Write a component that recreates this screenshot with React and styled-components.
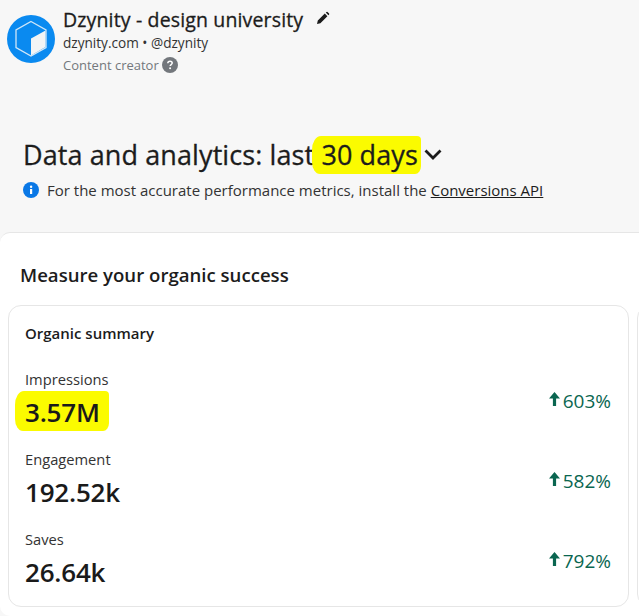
import styled, { createGlobalStyle } from "styled-components";

const GlobalStyle = createGlobalStyle`
  html, body {
    margin: 0;
    padding: 0;
    background: #f7f7f7;
  }
  body {
    font-family: "Open Sans", "Noto Sans", "Liberation Sans", sans-serif;
    color: #1a1a1a;
    overflow: hidden;
  }
`;

const Page = styled.div`
  width: 639px;
  height: 616px;
  display: flex;
  flex-direction: column;
  overflow: hidden;
`;
const Profile = styled.div`
  display: flex;
  align-items: center;
  gap: 8px;
  padding: 8px 0 0 7px;
  height: 70px;
  box-sizing: border-box;
`;
const ProfileText = styled.div`
  display: flex;
  flex-direction: column;
  align-self: flex-start;
  margin-top: -1px;
`;
const NameRow = styled.div`
  display: flex;
  align-items: flex-start;
  gap: 13px;
  height: 27px;
`;
const Name = styled.div`
  font-size: 19.5px;
  line-height: 26px;
  font-weight: 500;
  letter-spacing: 0.15px;
  color: #1c1c1c;
  -webkit-text-stroke: 0.3px #1c1c1c;
`;
const EditIcon = styled.svg`
  margin-top: 4px;
`;
const Handle = styled.div`
  font-size: 13.6px;
  line-height: 18px;
  color: #333;
`;
const Category = styled.div`
  display: flex;
  align-items: center;
  gap: 3px;
  margin-top: 4px;
  font-size: 13px;
  line-height: 18px;
  color: #73777c;
`;
const Heading = styled.div`
  display: flex;
  align-items: center;
  margin: 62px 0 0 23px;
  height: 44px;
  font-size: 27px;
  font-weight: 400;
  letter-spacing: 0.1px;
  color: #1c1c1c;
  -webkit-text-stroke: 0.3px #1c1c1c;
`;
const Highlight = styled.span`
  position: relative;
  z-index: 0;
  &::before {
    content: "";
    position: absolute;
    z-index: -1;
    left: ${(props) => props.$left}px;
    right: ${(props) => props.$right}px;
    top: ${(props) => props.$top}px;
    bottom: ${(props) => props.$bottom}px;
    background: #fbfb00;
    border-radius: 9px 4px 6px 8px / 14px 4px 8px 12px;
  }
`;
const Notice = styled.div`
  display: flex;
  align-items: center;
  gap: 8px;
  margin: 4px 0 0 23px;
  font-size: 15px;
  line-height: 20px;
  color: #333;
`;
const Link = styled.a`
  color: #1c1c1c;
  text-decoration: underline;
`;
const Panel = styled.section`
  flex: 1;
  margin-top: 32px;
  padding: 0 0 9px 8px;
  background: #fff;
  border-top: 1px solid #e6e6e6;
  border-radius: 10px 0 0 10px;
  display: flex;
  flex-direction: column;
`;
const PanelTitle = styled.h2`
  margin: 29px 0 0 12px;
  font-size: 18.6px;
  line-height: 26px;
  font-weight: 600;
  color: #1c1c1c;
`;
const Cards = styled.div`
  flex: 1;
  display: flex;
  gap: 8px;
  margin-top: 17px;
`;
const Card = styled.div`
  width: 621px;
  flex: none;
  box-sizing: border-box;
  padding: 17px 16px 0;
  border: 1px solid #e6e6e6;
  border-radius: 13px;
`;
const CardTitle = styled.div`
  font-size: 15px;
  line-height: 20px;
  font-weight: 600;
  color: #1c1c1c;
  margin-bottom: 17px;
`;
const MetricRow = styled.div`
  display: flex;
  align-items: center;
  justify-content: space-between;
  height: 80px;
  padding-right: 1px;
`;
const MetricLabel = styled.div`
  font-size: 14.7px;
  line-height: 20px;
  color: #333;
`;
const MetricValue = styled.div`
  margin-top: 3px;
  font-size: 26px;
  line-height: 40px;
  font-weight: 600;
  letter-spacing: -0.2px;
  color: #1a1a1a;
`;
const Change = styled.div`
  display: flex;
  align-items: center;
  gap: 0;
  margin-top: 2px;
  font-size: 19px;
  line-height: 24px;
  color: #0a6650;
`;
const ChangeArrow = styled.svg`
  margin-top: -4px;
`;
const ChevronIcon = styled.svg`
  margin-left: 6px;
`;

const Logo = () => (
  <svg width="48" height="48" viewBox="0 0 48 48" aria-hidden="true">
    <circle cx="24" cy="24" r="24" fill="#0a8af0" />
    <path d="M24 23.5 L38.5 15.5 V32 L24 40.5 Z" fill="#f2f4f5" />
    <path d="M24 6.5 L39 15 V32.5 L24 41 L9 32.5 V15 Z" fill="none" stroke="#cfe6f8" strokeWidth="1.3" />
  </svg>
);

const Pencil = () => (
  <EditIcon width="14" height="14" viewBox="0 0 14 14" aria-hidden="true">
    <path d="M1 13 L1.8 9.6 L8.8 2.6 L11.4 5.2 L4.4 12.2 Z M9.8 1.6 L10.6 0.9 Q11 0.6 11.5 0.9 L13.1 2.5 Q13.4 3 13.1 3.4 L12.4 4.2 Z" fill="#1c1c1c" />
  </EditIcon>
);

const HelpIcon = () => (
  <svg width="16" height="16" viewBox="0 0 16 16" aria-hidden="true">
    <circle cx="8" cy="8" r="8" fill="#73777c" />
    <path d="M5.8 6.3 C5.9 4.9 6.8 4.3 8 4.3 C9.3 4.3 10.2 5 10.2 6.1 C10.2 7.6 8.2 7.6 8.2 9" fill="none" stroke="#fff" strokeWidth="1.5" />
    <circle cx="8.1" cy="11.2" r="1" fill="#fff" />
  </svg>
);

const InfoIcon = () => (
  <svg width="16" height="16" viewBox="0 0 16 16" aria-hidden="true">
    <circle cx="8" cy="8" r="8" fill="#0a78e6" />
    <rect x="7" y="7" width="2.2" height="5" fill="#fff" />
    <circle cx="8.1" cy="4.8" r="1.2" fill="#fff" />
  </svg>
);

const Chevron = () => (
  <ChevronIcon width="18" height="12" viewBox="0 0 18 12" aria-hidden="true">
    <path d="M1.5 2.5 L9 10 L16.5 2.5" fill="none" stroke="#1c1c1c" strokeWidth="2.8" />
  </ChevronIcon>
);

const UpArrow = () => (
  <ChangeArrow width="15" height="16" viewBox="0 0 14 16" aria-hidden="true">
    <path d="M6 1 L11.5 7.5 H7.6 V15 H4.4 V7.5 H0.5 Z" fill="#0a6650" />
  </ChangeArrow>
);

const metrics = [
  { label: "Impressions", value: "3.57M", change: "603%", marked: true },
  { label: "Engagement", value: "192.52k", change: "582%" },
  { label: "Saves", value: "26.64k", change: "792%" },
];

export default function App() {
  return (
    <Page>
      <GlobalStyle />
      <Profile>
        <Logo />
        <ProfileText>
          <NameRow>
            <Name>Dzynity - design university</Name>
            <Pencil />
          </NameRow>
          <Handle>dzynity.com • @dzynity</Handle>
          <Category>
            Content creator <HelpIcon />
          </Category>
        </ProfileText>
      </Profile>
      <Heading>
        Data and analytics: last&nbsp;
        <Highlight $left={-9} $right={-3} $top={0} $bottom={-1}>30 days</Highlight>
        <Chevron />
      </Heading>
      <Notice>
        <InfoIcon />
        <span>
          For the most accurate performance metrics, install the <Link>Conversions API</Link>
        </span>
      </Notice>
      <Panel>
        <PanelTitle>Measure your organic success</PanelTitle>
        <Cards>
          <Card>
            <CardTitle>Organic summary</CardTitle>
            {metrics.map((m) => (
              <MetricRow key={m.label}>
                <div>
                  <MetricLabel>{m.label}</MetricLabel>
                  <MetricValue>
                    {m.marked ? (
                      <Highlight $left={-10} $right={-9} $top={-3} $bottom={-1}>{m.value}</Highlight>
                    ) : (
                      m.value
                    )}
                  </MetricValue>
                </div>
                <Change>
                  <UpArrow />
                  {m.change}
                </Change>
              </MetricRow>
            ))}
          </Card>
          <Card />
        </Cards>
      </Panel>
    </Page>
  );
}
